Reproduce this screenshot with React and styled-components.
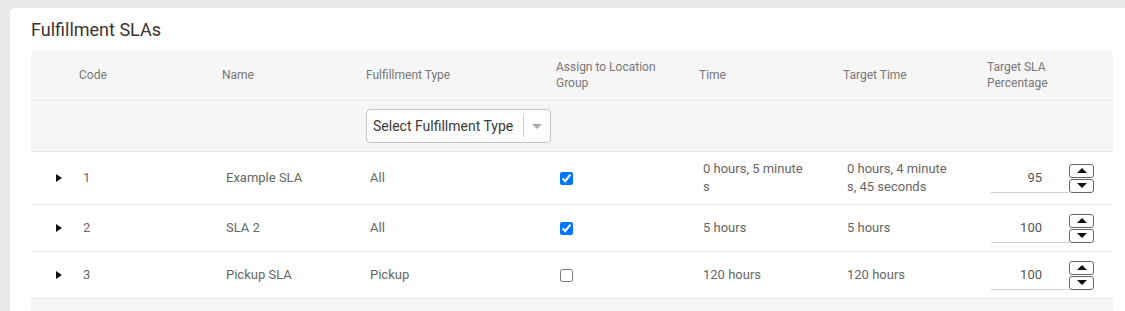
import styled, { createGlobalStyle } from "styled-components";

const GlobalStyle = createGlobalStyle`
  body {
    margin: 0;
    background: #e9e9e9;
    font-family: Roboto, "Liberation Sans", Arial, sans-serif;
    overflow: hidden;
  }
`;

const columns = "40px 143px 144px 190px 143px 144px 144px 1fr";

const rows = [
  { code: "1", name: "Example SLA", type: "All", assigned: true, time: "0 hours, 5 minutes", target: "0 hours, 4 minutes, 45 seconds", pct: 95 },
  { code: "2", name: "SLA 2", type: "All", assigned: true, time: "5 hours", target: "5 hours", pct: 100 },
  { code: "3", name: "Pickup SLA", type: "Pickup", assigned: false, time: "120 hours", target: "120 hours", pct: 100 },
];

const Page = styled.div`
  padding: 8px 0 0 10px;
`;

const Card = styled.section`
  width: 1124px;
  height: 303px;
  background: #fff;
  border-radius: 5px 5px 0 0;
  padding: 0 21px;
  box-sizing: border-box;
  overflow: hidden;
`;

const Title = styled.h2`
  margin: 0;
  height: 42px;
  display: flex;
  align-items: center;
  font-size: 18px;
  font-weight: 400;
  color: #3d3330;
`;

const Table = styled.div`
  width: 1082px;
  background: #f6f6f6;
  border-radius: 5px 5px 0 0;
  height: 261px;
`;

const Row = styled.div`
  display: grid;
  grid-template-columns: ${columns};
  align-items: center;
  min-height: ${(p) => p.$height || 46}px;
  border-bottom: 1px solid #e8e8e8;
  background: ${(p) => (p.$body ? "#fff" : "transparent")};
`;

const HeadCell = styled.div`
  padding: 0 8px;
  font-size: 12px;
  line-height: 16px;
  color: #777;
`;

const FilterCell = styled.div`
  padding: 0 8px;
`;

const Cell = styled.div`
  padding: 8px 12px;
  font-size: 13px;
  line-height: 18px;
  color: #666;
`;

const Wrap = styled.div`
  width: 102px;
  word-break: break-all;
`;

const Expander = styled.span`
  display: block;
  margin-left: 25px;
  width: 0;
  height: 0;
  border-top: 4.5px solid transparent;
  border-bottom: 4.5px solid transparent;
  border-left: 6px solid #111;
`;

const Select = styled.div`
  display: flex;
  align-items: center;
  width: 185px;
  height: 34px;
  box-sizing: border-box;
  border: 1px solid #c4c4c4;
  border-radius: 4px;
  background: #fff;
  font-size: 14px;
  color: #3a3a3a;
  span {
    flex: 1;
    padding-left: 6px;
    white-space: nowrap;
  }
`;

const SelectArrow = styled.div`
  width: 26px;
  height: 22px;
  border-left: 1px solid #d0d0d0;
  display: flex;
  align-items: center;
  justify-content: center;
  &::after {
    content: "";
    border-left: 5px solid transparent;
    border-right: 5px solid transparent;
    border-top: 5px solid #aaa;
  }
`;

const Check = styled.input`
  margin: 0;
  width: 13px;
  height: 13px;
  display: block;
`;

const Percent = styled.div`
  display: flex;
  align-items: center;
`;

const NumberBox = styled.div`
  width: 78px;
  height: 29px;
  box-sizing: border-box;
  border-bottom: 1px solid #cfcfcf;
  text-align: right;
  padding-right: 27px;
  line-height: 28px;
  font-size: 13px;
  color: #555;
`;

const Stepper = styled.div`
  display: flex;
  flex-direction: column;
  gap: 1px;
`;

const StepButton = styled.button`
  width: 25px;
  height: 14px;
  padding: 0;
  border: 1px solid #666;
  border-radius: 3px;
  background: #fff;
  display: flex;
  align-items: center;
  justify-content: center;
  &::after {
    content: "";
    border-left: 5px solid transparent;
    border-right: 5px solid transparent;
    ${(p) => (p.$up ? "border-bottom: 5px solid #111;" : "border-top: 5px solid #111;")}
  }
`;

export default function App() {
  return (
    <>
      <GlobalStyle />
      <Page>
        <Card>
          <Title>Fulfillment SLAs</Title>
          <Table>
            <Row $height={50}>
              <HeadCell />
              <HeadCell>Code</HeadCell>
              <HeadCell>Name</HeadCell>
              <HeadCell>Fulfillment Type</HeadCell>
              <HeadCell>Assign to Location<br />Group</HeadCell>
              <HeadCell>Time</HeadCell>
              <HeadCell>Target Time</HeadCell>
              <HeadCell>Target SLA<br />Percentage</HeadCell>
            </Row>
            <Row $height={50}>
              <FilterCell />
              <FilterCell />
              <FilterCell />
              <FilterCell>
                <Select>
                  <span>Select Fulfillment Type</span>
                  <SelectArrow />
                </Select>
              </FilterCell>
            </Row>
            {rows.map((r) => (
              <Row $body key={r.code}>
                <div><Expander /></div>
                <Cell>{r.code}</Cell>
                <Cell>{r.name}</Cell>
                <Cell>{r.type}</Cell>
                <Cell><Check type="checkbox" defaultChecked={r.assigned} /></Cell>
                <Cell><Wrap>{r.time}</Wrap></Cell>
                <Cell><Wrap>{r.target}</Wrap></Cell>
                <Cell>
                  <Percent>
                    <NumberBox>{r.pct}</NumberBox>
                    <Stepper>
                      <StepButton $up aria-label="up" />
                      <StepButton aria-label="down" />
                    </Stepper>
                  </Percent>
                </Cell>
              </Row>
            ))}
          </Table>
        </Card>
      </Page>
    </>
  );
}
